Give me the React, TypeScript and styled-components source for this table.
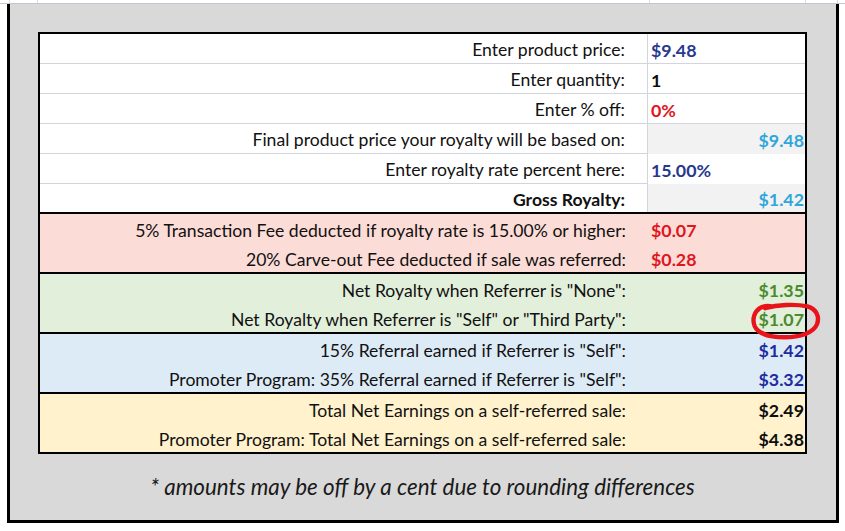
import React from "react";
import styled, { createGlobalStyle } from "styled-components";

const GlobalStyle = createGlobalStyle`
  html, body { margin: 0; padding: 0; background: #ffffff; }
  body { font-family: "Lato", "Open Sans", "DejaVu Sans", sans-serif; }
`;

const Page = styled.div`
  width: 845px;
  height: 531px;
  background: #ffffff;
  overflow: hidden;
`;

const TopStrip = styled.div`
  height: 4px;
  box-sizing: border-box;
  border-bottom: 1px solid #c4c7d0;
  display: flex;
`;

const StripCell = styled.div<{ $w: number }>`
  width: ${(p) => p.$w}px;
  flex: none;
  box-sizing: border-box;
  border-right: 1px solid #dadce3;
`;

const Frame = styled.div`
  margin-left: 7px;
  width: 832px;
  height: 519px;
  box-sizing: border-box;
  border: 3px solid #000000;
  border-top: none;
  background: #d9d9d9;
  padding: 28px 0 0 28px;
  display: flex;
  flex-direction: column;
`;

const Table = styled.div`
  width: 769px;
  box-sizing: border-box;
  border: 2px solid #000000;
  border-bottom: none;
  background: #ffffff;
`;

const Section = styled.div<{ $rows: number; $bg: string }>`
  height: ${(p) => p.$rows * 30}px;
  box-sizing: border-box;
  border-bottom: 2px solid #000000;
  background: ${(p) => p.$bg};
`;

const Row = styled.div`
  display: grid;
  grid-template-columns: 608px 1fr;
  height: 30px;
  &:last-child { height: 28px; }
`;

const Label = styled.div<{ $grid?: boolean; $bold?: boolean }>`
  display: flex;
  align-items: center;
  justify-content: flex-end;
  box-sizing: border-box;
  padding: 2px 22px 0 0;
  font-size: 17.6px;
  color: #111111;
  font-weight: ${(p) => (p.$bold ? 700 : 400)};
  white-space: nowrap;
  ${(p) =>
    p.$grid
      ? "border-right: 1px solid #d3d5dd; border-bottom: 1px solid #d3d5dd;"
      : ""}
  ${Row}:last-child & { border-bottom: none; }
`;

const Value = styled.div<{
  $color: string;
  $right?: boolean;
  $bg?: string;
  $grid?: boolean;
}>`
  position: relative;
  display: flex;
  align-items: center;
  justify-content: ${(p) => (p.$right ? "flex-end" : "flex-start")};
  box-sizing: border-box;
  padding: ${(p) => (p.$right ? "2px 1px 0 0" : "2px 0 0 3px")};
  font-size: 17.8px;
  font-weight: 700;
  color: ${(p) => p.$color};
  background: ${(p) => p.$bg || "transparent"};
  white-space: nowrap;
  ${(p) => (p.$grid ? "border-bottom: 1px solid #d3d5dd;" : "")}
`;

const Circle = styled.svg`
  position: absolute;
  left: 99px;
  top: -2px;
  width: 75px;
  height: 37px;
  overflow: visible;
  pointer-events: none;
`;

const Footnote = styled.div`
  flex: 1;
  width: 769px;
  display: flex;
  align-items: center;
  justify-content: center;
  font-size: 22.4px;
  font-style: italic;
  color: #1a1a1a;
  padding-bottom: 2px;
`;

const NAVY = "#27388f";
const RED = "#e0161e";
const CYAN = "#2fa6dc";
const GREEN = "#4b8a2d";
const BLUE = "#1d2c9f";
const BLACK = "#0d0d0d";
const CELLGRAY = "#f2f2f2";

export default function App() {
  return (
    <Page>
      <GlobalStyle />
      <TopStrip>
        <StripCell $w={10} />
        <StripCell $w={28} />
        <StripCell $w={612} />
        <StripCell $w={156} />
        <StripCell $w={32} />
      </TopStrip>
      <Frame>
        <Table>
          <Section $rows={6} $bg="#ffffff">
            <Row>
              <Label $grid>Enter product price:</Label>
              <Value $color={NAVY} $grid>$9.48</Value>
            </Row>
            <Row>
              <Label $grid>Enter quantity:</Label>
              <Value $color={BLACK} $grid>1</Value>
            </Row>
            <Row>
              <Label $grid>Enter % off:</Label>
              <Value $color={RED} $grid>0%</Value>
            </Row>
            <Row>
              <Label $grid>Final product price your royalty will be based on:</Label>
              <Value $color={CYAN} $right $bg={CELLGRAY}>$9.48</Value>
            </Row>
            <Row>
              <Label $grid>Enter royalty rate percent here:</Label>
              <Value $color={NAVY}>15.00%</Value>
            </Row>
            <Row>
              <Label $grid $bold>Gross Royalty:</Label>
              <Value $color={CYAN} $right $bg={CELLGRAY}>$1.42</Value>
            </Row>
          </Section>
          <Section $rows={2} $bg="#fcdcd7">
            <Row>
              <Label>5% Transaction Fee deducted if royalty rate is 15.00% or higher:</Label>
              <Value $color={RED}>$0.07</Value>
            </Row>
            <Row>
              <Label>20% Carve-out Fee deducted if sale was referred:</Label>
              <Value $color={RED}>$0.28</Value>
            </Row>
          </Section>
          <Section $rows={2} $bg="#e2efda">
            <Row>
              <Label>Net Royalty when Referrer is "None":</Label>
              <Value $color={GREEN} $right>$1.35</Value>
            </Row>
            <Row>
              <Label>Net Royalty when Referrer is "Self" or "Third Party":</Label>
              <Value $color={GREEN} $right>
                $1.07
                <Circle viewBox="0 0 80 42">
                  <path
                    d="M18 7 C 32 3, 52 2, 66 5 C 76 8, 80 16, 77 25 C 73 35, 58 40, 40 40 C 24 40, 10 36, 6 27 C 3 19, 6 11, 12 7 C 15 5, 20 4, 26 5"
                    fill="none"
                    stroke="#e8141c"
                    strokeWidth="5"
                    strokeLinecap="round"
                    strokeLinejoin="round"
                  />
                </Circle>
              </Value>
            </Row>
          </Section>
          <Section $rows={2} $bg="#ddebf7">
            <Row>
              <Label>15% Referral earned if Referrer is "Self":</Label>
              <Value $color={BLUE} $right>$1.42</Value>
            </Row>
            <Row>
              <Label>Promoter Program: 35% Referral earned if Referrer is "Self":</Label>
              <Value $color={BLUE} $right>$3.32</Value>
            </Row>
          </Section>
          <Section $rows={2} $bg="#fff2cc">
            <Row>
              <Label>Total Net Earnings on a self-referred sale:</Label>
              <Value $color={BLACK} $right>$2.49</Value>
            </Row>
            <Row>
              <Label>Promoter Program: Total Net Earnings on a self-referred sale:</Label>
              <Value $color={BLACK} $right>$4.38</Value>
            </Row>
          </Section>
        </Table>
        <Footnote>* amounts may be off by a cent due to rounding differences</Footnote>
      </Frame>
    </Page>
  );
}
